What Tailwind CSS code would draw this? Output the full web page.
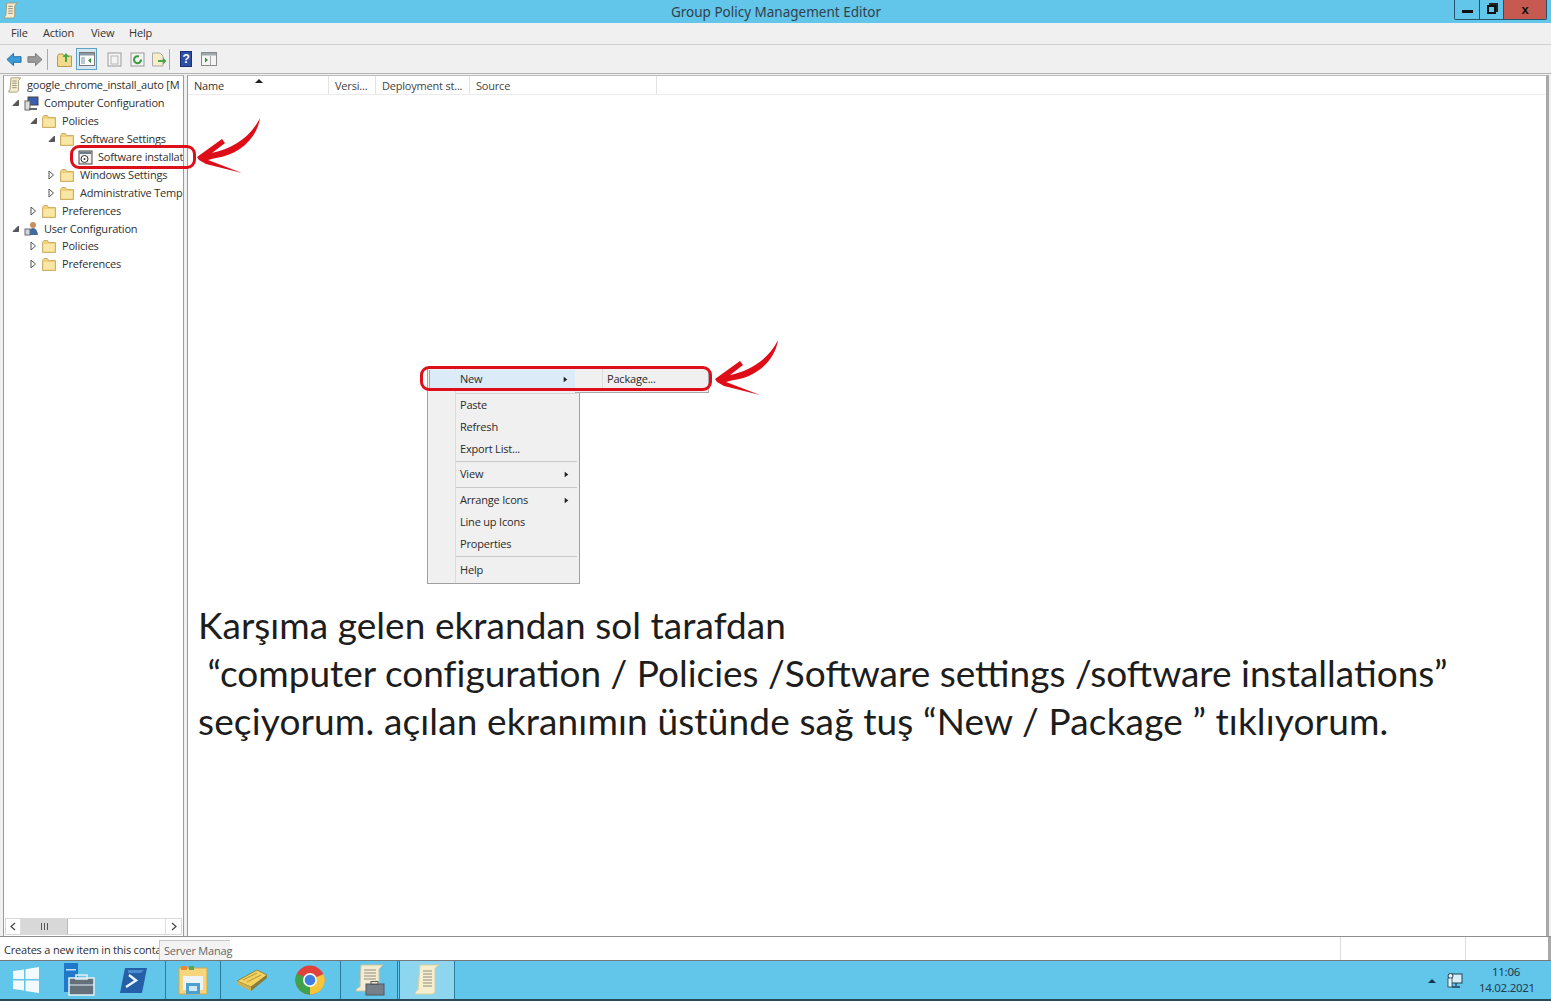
<!DOCTYPE html>
<html lang="tr">
<head>
<meta charset="utf-8">
<title>Group Policy Management Editor</title>
<script src="https://cdn.jsdelivr.net/npm/@tailwindcss/browser@4"></script>
</head>
<body class="m-0 overflow-hidden bg-white">
<svg class="absolute w-0 h-0" aria-hidden="true">
  <defs>
    <symbol id="folder" viewBox="0 0 14 13"><path d="M.5 2.5 L.5 12.5 L13.5 12.5 L13.5 2.5 L6.5 2.5 L5.5 .5 L2 .5 Z" fill="#f0d078" stroke="#cdb069"/><path d="M1.5 4 H12.5 V11.5 H1.5 Z" fill="#f9e7a8"/></symbol>
    <symbol id="scroll" viewBox="0 0 16 18"><path d="M4 1 H15 L12.5 4 V15 Q12 17 10 17 H1.5 Q1 15 3 14.5 Z" fill="#f5edcf" stroke="#a39a78"/><path d="M5.5 4.5 H10.5 M5.5 7 H10.5 M5.5 9.5 H10.5 M5.5 12 H10.5" stroke="#8c8c7c"/></symbol>
    <symbol id="right" viewBox="0 0 7 10"><path d="M1 1 L5.5 5 L1 9 Z" fill="#fff" stroke="#555"/></symbol>
    <symbol id="down" viewBox="0 0 8 8"><path d="M6.5 1 V6.5 H1 Z" fill="#555" stroke="#555"/></symbol>
    <symbol id="arrow" viewBox="0 0 70 60"><path d="M1 40 L26 22 L29 26 L16 36 C36 32 55 20 64 1 C61 22 42 38 20 41 C16 42 15 42 12 43 L46 56 L10 47 L3 43 Z" fill="#df0d18"/></symbol>
    <symbol id="tick" viewBox="0 0 7 8"><path d="M1 0 L6 4 L1 8 Z" fill="#222"/></symbol>
  </defs>
</svg>

<div class="relative w-[1551px] h-[1001px] overflow-hidden flex flex-col bg-[#f0f0f0] text-[#2c2c2c] font-['Open_Sans',sans-serif] text-[11px] tracking-[-0.2px]">

  <!-- title bar -->
  <header class="h-[23px] shrink-0 flex items-start bg-[#62c5ea] pl-[3px] pr-[4px]">
    <svg class="w-[15px] h-[17px] mt-[2px]"><use href="#scroll"/></svg>
    <h1 class="flex-1 text-center text-[13.5px] tracking-normal font-normal leading-[24px] text-[#30424c] pl-[80px] font-['Noto_Sans',sans-serif]">Group Policy Management Editor</h1>
    <div class="flex h-[20px] border border-t-0 border-[#24546b] rounded-b-[2px] overflow-hidden">
      <div class="w-[25px] flex items-center justify-center border-r border-[#24546b]"><div class="w-[11px] h-[3px] mt-[3px] bg-[#111]"></div></div>
      <div class="w-[24px] flex items-center justify-center border-r border-[#24546b]"><div class="relative w-[9px] h-[9px] border-2 border-[#111] bg-[#62c5ea] shadow-[2px_-2px_0_#222]"></div></div>
      <div class="w-[42px] flex items-center justify-center bg-[#c75a50] text-[#111] font-bold text-[13px] font-['Liberation_Sans',sans-serif] leading-none">x</div>
    </div>
  </header>

  <!-- menu -->
  <nav class="h-[22px] shrink-0 flex items-center border-b border-[#d0d0d0] pl-[11px] text-[11px] text-[#333]">
    <span class="w-[32px]">File</span><span class="w-[48px]">Action</span><span class="w-[38px]">View</span><span>Help</span>
  </nav>

  <!-- toolbar -->
  <div class="h-[29px] shrink-0 flex items-center pl-[6px] border-b border-[#b5b5b5]">
    <svg class="w-[16px] h-[15px]" viewBox="0 0 17 15"><path d="M1 7.5 L8 1 V4.5 H16 V10.5 H8 V14 Z" fill="#3c9ad6" stroke="#1f6ea5"/></svg>
    <svg class="w-[16px] h-[15px] ml-[5px]" viewBox="0 0 17 15"><path d="M16 7.5 L9 1 V4.5 H1 V10.5 H9 V14 Z" fill="#9a9a9a" stroke="#777"/></svg>
    <div class="w-px h-[21px] bg-[#aaa] ml-[4px]"></div>
    <svg class="w-[15px] h-[15px] ml-[9px]" viewBox="0 0 15 15"><path d="M.5 4 V14.5 H14.5 V4 H7 L6 2 H2 Z" fill="#f3d98a" stroke="#b89a50"/><path d="M8 10 V5 H5.5 L9 1 L12.5 5 H10 V10 Z" fill="#4aa84a"/></svg>
    <div class="w-[21px] h-[22px] ml-[4px] border border-[#5ea2c7] bg-[#d4e6f2] flex items-center justify-center">
      <svg class="w-[16px] h-[14px]" viewBox="0 0 16 14"><rect x=".5" y=".5" width="15" height="13" fill="#fff" stroke="#777"/><rect x="1" y="1" width="14" height="2.5" fill="#8a9aa5"/><rect x="2" y="5" width="4" height="7" fill="#b8c8d0"/><path d="M12 6 L9 8.5 L12 11 Z" fill="#2f8f3a"/></svg>
    </div>
    <svg class="w-[15px] h-[15px] ml-[10px]" viewBox="0 0 15 15"><rect x="1" y="1" width="13" height="13" fill="#f4f4f4" stroke="#9a9a9a"/><rect x="4" y="4" width="7" height="8" fill="none" stroke="#b5b5b5"/></svg>
    <svg class="w-[15px] h-[15px] ml-[8px]" viewBox="0 0 15 15"><rect x="1" y="1" width="13" height="13" fill="#f4f4f4" stroke="#9a9a9a"/><path d="M11 7.5 A3.5 3.5 0 1 1 9 4.5" fill="none" stroke="#3b9a3f" stroke-width="2"/></svg>
    <svg class="w-[16px] h-[15px] ml-[6px]" viewBox="0 0 16 15"><path d="M1.5 1 H9 L12 4 V14 H1.5 Z" fill="#f8edc8" stroke="#aaa"/><path d="M7 8 H12 V5.5 L15.5 9 L12 12.5 V10 H7 Z" fill="#49a84c"/></svg>
    <div class="w-px h-[21px] bg-[#aaa] ml-[2px]"></div>
    <div class="w-[12px] h-[16px] ml-[10px] bg-[#2c4fa8] border border-[#1a2f72] text-white text-[12px] font-bold leading-[14px] text-center font-['Liberation_Sans',sans-serif]">?</div>
    <svg class="w-[16px] h-[14px] ml-[9px]" viewBox="0 0 16 14"><rect x=".5" y=".5" width="15" height="13" fill="#f4f4f4" stroke="#8a8a8a"/><rect x="1" y="1" width="14" height="2.5" fill="#9aa"/><path d="M4 5.5 L7 8 L4 10.5 Z" fill="#2f8f3a"/><path d="M9.5 4 V13" stroke="#aaa"/></svg>
  </div>

  <!-- panes -->
  <main class="flex-1 min-h-0 flex pl-[3px] pr-[2px] pt-[1px] gap-[3px] border-b border-[#8f8f8f]">
    <!-- tree -->
    <section class="w-[181px] shrink-0 flex flex-col bg-white border-x border-[#9c9c9c] border-t border-t-[#bbb] text-[11px] text-[#303030]">
      <div class="flex-1 min-h-0 overflow-hidden leading-[18px]">
        <div class="h-[18px] flex items-center pl-[3px] whitespace-nowrap"><svg class="w-[15px] h-[16px] shrink-0 mr-[5px]"><use href="#scroll"/></svg>google_chrome_install_auto [M</div>
        <div class="h-[18px] flex items-center pl-[8px] whitespace-nowrap"><svg class="w-[8px] h-[8px] shrink-0 mr-[4px]"><use href="#down"/></svg>
          <svg class="w-[15px] h-[15px] shrink-0 mr-[5px]" viewBox="0 0 15 15"><rect x="4" y="1" width="10" height="8" fill="#3a5fb0" stroke="#444"/><rect x="1" y="5" width="5" height="9" fill="#ddd" stroke="#666"/><path d="M5 13 H13" stroke="#666" stroke-width="2"/></svg>Computer Configuration</div>
        <div class="h-[18px] flex items-center pl-[26px] whitespace-nowrap"><svg class="w-[8px] h-[8px] shrink-0 mr-[4px]"><use href="#down"/></svg><svg class="w-[14px] h-[13px] shrink-0 mr-[6px]"><use href="#folder"/></svg>Policies</div>
        <div class="h-[18px] flex items-center pl-[44px] whitespace-nowrap"><svg class="w-[8px] h-[8px] shrink-0 mr-[4px]"><use href="#down"/></svg><svg class="w-[14px] h-[13px] shrink-0 mr-[6px]"><use href="#folder"/></svg>Software Settings</div>
        <div class="h-[18px] flex items-center pl-[74px] whitespace-nowrap">
          <svg class="w-[15px] h-[15px] shrink-0 mr-[5px]" viewBox="0 0 15 15"><rect x="1" y="1" width="13" height="13" fill="#f1f1f1" stroke="#444"/><rect x="1.5" y="1.5" width="12" height="2.5" fill="#6d7a86"/><circle cx="6.5" cy="9" r="3.5" fill="#fff" stroke="#333"/><circle cx="6.5" cy="9" r="1" fill="#333"/></svg>Software installat</div>
        <div class="h-[18px] flex items-center pl-[44px] whitespace-nowrap"><svg class="w-[7px] h-[10px] shrink-0 mr-[5px]"><use href="#right"/></svg><svg class="w-[14px] h-[13px] shrink-0 mr-[6px]"><use href="#folder"/></svg>Windows Settings</div>
        <div class="h-[18px] flex items-center pl-[44px] whitespace-nowrap"><svg class="w-[7px] h-[10px] shrink-0 mr-[5px]"><use href="#right"/></svg><svg class="w-[14px] h-[13px] shrink-0 mr-[6px]"><use href="#folder"/></svg>Administrative Temp</div>
        <div class="h-[18px] flex items-center pl-[26px] whitespace-nowrap"><svg class="w-[7px] h-[10px] shrink-0 mr-[5px]"><use href="#right"/></svg><svg class="w-[14px] h-[13px] shrink-0 mr-[6px]"><use href="#folder"/></svg>Preferences</div>
        <div class="h-[17px] flex items-center pl-[8px] whitespace-nowrap"><svg class="w-[8px] h-[8px] shrink-0 mr-[4px]"><use href="#down"/></svg>
          <svg class="w-[15px] h-[15px] shrink-0 mr-[5px]" viewBox="0 0 15 15"><circle cx="9" cy="4" r="3" fill="#c98f5f"/><path d="M4 14 Q5 7 9 7 Q13 7 14 14 Z" fill="#3f6c9c"/><rect x="1" y="8" width="5" height="6" fill="#cfd8df" stroke="#667"/></svg>User Configuration</div>
        <div class="h-[18px] flex items-center pl-[26px] whitespace-nowrap"><svg class="w-[7px] h-[10px] shrink-0 mr-[5px]"><use href="#right"/></svg><svg class="w-[14px] h-[13px] shrink-0 mr-[6px]"><use href="#folder"/></svg>Policies</div>
        <div class="h-[18px] flex items-center pl-[26px] whitespace-nowrap"><svg class="w-[7px] h-[10px] shrink-0 mr-[5px]"><use href="#right"/></svg><svg class="w-[14px] h-[13px] shrink-0 mr-[6px]"><use href="#folder"/></svg>Preferences</div>
      </div>
      <!-- scrollbar -->
      <div class="h-[17px] shrink-0 mx-[1px] mb-[1px] flex items-center border border-[#d8d8d8] bg-white text-[#444]">
        <div class="w-[15px] h-full flex items-center justify-center border-r border-[#ddd]"><svg class="w-[6px] h-[9px]" viewBox="0 0 6 9"><path d="M5 1 L1 4.5 L5 8" fill="none" stroke="#444" stroke-width="1.2"/></svg></div>
        <div class="w-[47px] h-full flex items-center justify-center gap-px bg-[#d8d8d8] border-r border-[#bbb]"><i class="w-px h-[7px] bg-[#555]"></i><i class="w-px h-[7px] bg-[#555] mx-px"></i><i class="w-px h-[7px] bg-[#555]"></i></div>
        <div class="flex-1"></div>
        <div class="w-[16px] h-full flex items-center justify-center border-l border-[#ddd]"><svg class="w-[6px] h-[9px]" viewBox="0 0 6 9"><path d="M1 1 L5 4.5 L1 8" fill="none" stroke="#444" stroke-width="1.2"/></svg></div>
      </div>
    </section>

    <!-- list -->
    <section class="flex-1 min-w-0 bg-white border-l border-[#9c9c9c] border-r-[3px] border-r-[#a8a8a8] border-t border-t-[#bbb] text-[11px] text-[#444]">
      <div class="h-[19px] flex items-center border-b border-[#ececec]">
        <div class="relative w-[141px] h-full pl-[6px] leading-[19px] border-r border-[#e3e3e3] text-[#333]">Name<span class="absolute left-[67px] top-[3px] w-0 h-0 border-x-[4px] border-x-transparent border-b-[4px] border-b-[#222]"></span></div>
        <div class="w-[47px] h-full pl-[6px] leading-[19px] border-r border-[#e3e3e3]">Versi...</div>
        <div class="w-[94px] h-full pl-[6px] leading-[19px] whitespace-nowrap border-r border-[#e3e3e3]">Deployment st...</div>
        <div class="w-[187px] h-full pl-[6px] leading-[19px] border-r border-[#e3e3e3]">Source</div>
      </div>
    </section>
  </main>

  <!-- status -->
  <footer class="h-[24px] shrink-0 flex bg-white text-[11px] text-[#303030] border-b border-[#777]">
    <div class="w-[159px] pl-[4px] leading-[25px] whitespace-nowrap">Creates a new item in this conta</div>
    <div class="w-[71px] mt-[3px] pl-[4px] leading-[19px] whitespace-nowrap bg-[#f3f3f3] border-l border-t border-[#c6c6c6] text-[#666]">Server Manag</div>
    <div class="flex-1 border-r border-[#ddd]"></div>
    <div class="w-[125px] border-r border-[#ddd]"></div>
    <div class="w-[85px] border-r-[3px] border-[#a8a8a8]"></div>
  </footer>

  <!-- taskbar -->
  <div class="h-[40px] shrink-0 flex items-center bg-[#62c5ea] border-b-[2px] border-[#2a4a58] text-[#20404f]">
    <div class="w-[50px] flex justify-center pl-[2px]">
      <svg class="w-[26px] h-[26px]" viewBox="0 0 26 26"><path d="M0 4 L11 2.5 V12 H0 Z M12.5 2.3 L26 0 V12 H12.5 Z M0 13.5 H11 V23.5 L0 22 Z M12.5 13.5 H26 V26 L12.5 24 Z" fill="#f2fafd"/></svg>
    </div>
    <div class="w-[55px] flex justify-center pl-[3px]">
      <svg class="w-[32px] h-[34px]" viewBox="0 0 32 34"><rect x="1" y="0" width="14" height="29" fill="#1f79c8"/><rect x="3" y="6" width="10" height="1.5" fill="#bfe0f5"/><rect x="6" y="15" width="25" height="17" fill="#64707a" stroke="#e6f2f7" stroke-width="1.5"/><rect x="13" y="12" width="11" height="4" fill="none" stroke="#e6f2f7" stroke-width="1.5"/><path d="M6 22 H31" stroke="#e6f2f7"/></svg>
    </div>
    <div class="w-[61px] flex justify-center border-r border-[#2e7c9f] h-full items-center pr-[3px]">
      <svg class="w-[27px] h-[25px]" viewBox="0 0 27 25"><path d="M5 0 H27 L22 25 H0 Z" fill="#245fa8"/><path d="M8 2 H24 L21 5 H8 Z" fill="#4a8cd0"/><path d="M9 7 L16 12.5 L6 19" fill="none" stroke="#eaf6ff" stroke-width="2.5"/></svg>
    </div>
    <div class="w-[55px] flex justify-center border-r border-[#2e7c9f] h-full items-center">
      <svg class="w-[30px] h-[30px]" viewBox="0 0 30 30"><rect x="1" y="3" width="28" height="26" fill="#f5d67c" stroke="#d2a94f"/><rect x="3" y="1" width="6" height="4" fill="#e88a3a"/><rect x="11" y="1" width="5" height="4" fill="#5aa654"/><rect x="5" y="11" width="20" height="14" fill="#edf4f7"/><rect x="8" y="18" width="14" height="11" fill="#4d9fd0"/><rect x="11" y="21" width="8" height="5" fill="#cfe8f5"/></svg>
    </div>
    <div class="w-[60px] flex justify-center h-full items-center pl-[2px]">
      <svg class="w-[31px] h-[22px]" viewBox="0 0 31 22"><path d="M0 12 L20 1 L30 6 L14 18 Z" fill="#f3d25e" stroke="#8a7428" stroke-width=".8"/><path d="M0 12 L14 18 L14 22 L0 15 Z" fill="#d0b04a"/><path d="M14 18 L30 6 L30 9 L14 22 Z" fill="#8f7a35"/><path d="M6 11 L20 4 M10 13 L24 6" stroke="#b0963c"/></svg>
    </div>
    <div class="w-[60px] flex justify-center border-r border-[#2e7c9f] h-full items-center pr-[1px]">
      <svg class="w-[30px] h-[30px]" viewBox="0 0 30 30"><circle cx="15" cy="15" r="14.5" fill="#e0413a"/><path d="M15 15 L2.4 22.3 A14.5 14.5 0 0 0 15 29.5 Z" fill="#3da24a"/><path d="M15 15 L2.4 22.3 A14.5 14.5 0 0 1 2 8.5 Z" fill="#3da24a"/><path d="M15 15 L28.5 9 A14.5 14.5 0 0 1 15 29.5 Z" fill="#f5c63a"/><circle cx="15" cy="15" r="7" fill="#f4f8fb"/><circle cx="15" cy="15" r="5.3" fill="#3f7fe0"/></svg>
    </div>
    <div class="w-[57px] flex justify-center border-r border-[#2e7c9f] h-full items-center pl-[2px]">
      <svg class="w-[30px] h-[32px]" viewBox="0 0 30 32"><path d="M6 1 H28 L24 5 V27 H1 Q1 24 5 23 Z" fill="#f4ecd2" stroke="#cfc49e"/><path d="M9 6 H21 M9 9 H21 M9 12 H21 M9 15 H21" stroke="#8e8e80"/><rect x="11" y="20" width="18" height="11" fill="#778088" stroke="#505860"/><rect x="16" y="17.5" width="7" height="3" fill="none" stroke="#505860"/></svg>
    </div>
    <div class="w-[56px] h-full ml-[1px] flex justify-center items-center bg-[#8ed5f0] border-x border-[#2e7c9f]">
      <svg class="w-[26px] h-[32px]" viewBox="0 0 26 32"><path d="M6 1 H25 L21 4 V27 Q21 30 18 30 H1 Q1 27 4 26 Z" fill="#f6efcf" stroke="#dccf9c"/><path d="M9 7 H18 M9 10 H18 M9 13 H18 M9 16 H18 M9 19 H18 M9 22 H18" stroke="#8e8e80"/></svg>
    </div>
    <div class="flex-1"></div>
    <span class="w-0 h-0 border-x-[4px] border-x-transparent border-b-[4px] border-b-[#17364a] mr-[11px] mt-[2px]"></span>
    <svg class="w-[16px] h-[17px] mr-[16px]" viewBox="0 0 16 17"><rect x="4" y="2" width="11" height="9" fill="#d9edf5" stroke="#1f4254"/><path d="M9 11 V14 M5 15 H13" stroke="#1f4254" stroke-width="1.3"/><circle cx="3.5" cy="4" r="2.5" fill="#e8f4f8" stroke="#1f4254"/><rect x="1" y="6" width="4" height="9" fill="#e8f4f8" stroke="#1f4254" stroke-width=".8"/></svg>
    <div class="w-[54px] mr-[18px] text-center text-[11.5px] leading-[16px] font-['Noto_Sans',sans-serif] tracking-[-0.3px]"><div>11:06</div><div>14.02.2021</div></div>
  </div>

  <!-- context menu -->
  <div class="absolute left-[427px] top-[368px] w-[153px] h-[216px] bg-[#f0f0f0] border border-[#a0a0a0] text-[11px] text-[#2a2a2a]">
    <div class="absolute left-[27px] top-0 bottom-0 w-px bg-[#dcdcdc]"></div>
    <div class="relative h-[20px] mt-px mx-px pb-[1px] flex items-center justify-between pl-[30px] pr-[10px] bg-[#dcebf8] border-l border-[#7ab0cc]">New<svg class="w-[5px] h-[7px]"><use href="#tick"/></svg></div>
    <div class="relative h-px ml-[28px] mr-[2px] mt-[3px] bg-[#d4d4d4]"></div>
    <div class="relative h-[22px] pl-[32px] flex items-center">Paste</div>
    <div class="relative h-[22px] pl-[32px] flex items-center">Refresh</div>
    <div class="relative h-[22px] pl-[32px] flex items-center">Export List...</div>
    <div class="relative h-px ml-[28px] mr-[2px] mt-[1px] bg-[#c8c8c8]"></div>
    <div class="relative h-[25px] pl-[32px] pr-[10px] flex items-center justify-between">View<svg class="w-[5px] h-[7px]"><use href="#tick"/></svg></div>
    <div class="relative h-px ml-[28px] mr-[2px] bg-[#c8c8c8]"></div>
    <div class="relative h-[24px] pl-[32px] pr-[10px] flex items-center justify-between">Arrange Icons<svg class="w-[5px] h-[7px]"><use href="#tick"/></svg></div>
    <div class="relative h-[22px] pl-[32px] flex items-center -mt-[1px]">Line up Icons</div>
    <div class="relative h-[22px] pl-[32px] flex items-center">Properties</div>
    <div class="relative h-px ml-[28px] mr-[2px] mt-[1px] bg-[#c8c8c8]"></div>
    <div class="relative h-[25px] pt-[1px] pl-[32px] flex items-center">Help</div>
  </div>
  <!-- submenu -->
  <div class="absolute left-[575px] top-[369px] w-[134px] h-[24px] pb-[3px] bg-[#f0f0f0] border border-[#a8a8a8] border-t-0 border-l-0 flex items-center text-[11px] text-[#2a2a2a]">
    <div class="w-[28px] h-full border-r border-[#dcdcdc]"></div><span class="pl-[4px]">Package...</span>
  </div>

  <!-- red marks -->
  <div class="absolute left-[70px] top-[145px] w-[126px] h-[24px] rounded-[9px] border-[3px] border-[#dd0f1a]"></div>
  <div class="absolute left-[420px] top-[366px] w-[292px] h-[25px] rounded-[9px] border-[3px] border-[#dd0f1a]"></div>
  <svg class="absolute left-[196px] top-[117px] w-[70px] h-[60px]"><use href="#arrow"/></svg>
  <svg class="absolute left-[714px] top-[339px] w-[70px] h-[60px]"><use href="#arrow"/></svg>

  <!-- caption -->
  <div class="absolute left-[198px] top-[601px] w-[1300px] text-[37px] leading-[48px] text-[#1d1d1d] font-['Lato',sans-serif] whitespace-pre tracking-normal"><div class="tracking-[0.05px]">Karşıma gelen ekrandan sol tarafdan</div><div> “computer configuration / Policies /Software settings /software installations”</div><div class="tracking-[0.14px]">seçiyorum. açılan ekranımın üstünde sağ tuş “New / Package ” tıklıyorum.</div></div>
</div>
</body>
</html>
